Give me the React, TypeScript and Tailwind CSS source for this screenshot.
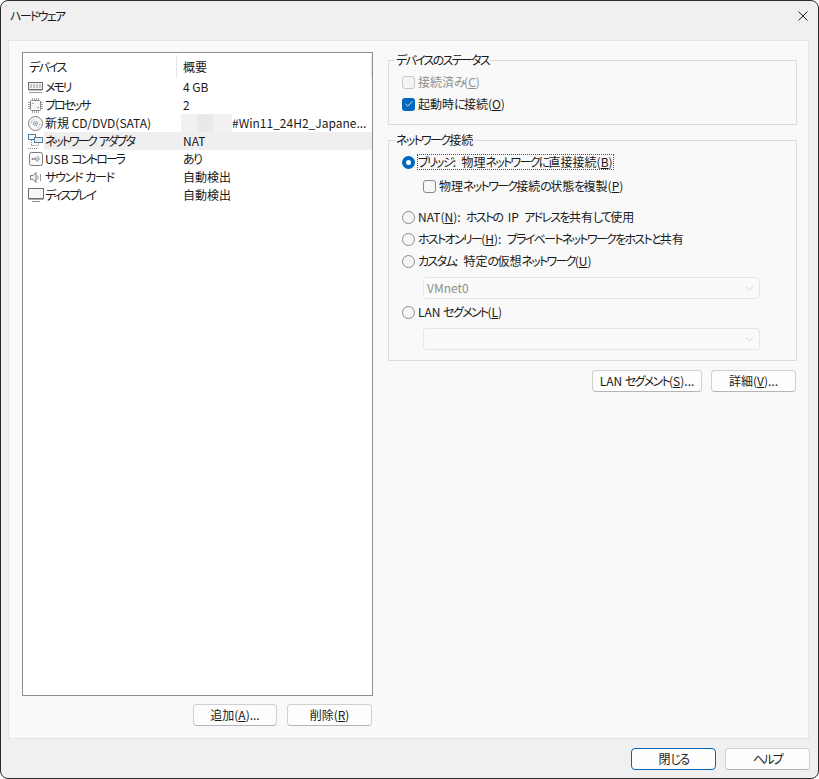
import type { ReactNode } from 'react';
import { ChevronDown, Check } from 'lucide-react';

const FONT = 'font-["Noto_Sans_CJK_JP","Noto_Sans",sans-serif] [font-feature-settings:"palt"]';

// kana in the reference font is much narrower than in Noto, so tighten those runs
function T({ children, tracking = 'tracking-[-1.7px]' }: { children: string; tracking?: string }) {
  const parts = children.split(/([\u3040-\u30ff]+)/);
  return (
    <>
      {parts.map((part, i) =>
        i % 2 === 1 ? (
          <span key={i} className={tracking}>
            {part}
          </span>
        ) : (
          part
        ),
      )}
    </>
  );
}

function MemoryIcon() {
  return (
    <svg viewBox="0 0 15 11" className="w-[15px] h-[11px]" fill="none" stroke="#6f6f6f" strokeWidth="1">
      <rect x="0.5" y="0.5" width="14" height="7" fill="#f2f2f2" />
      <path d="M2 3h11M2 5h11" stroke="#9a9a9a" strokeDasharray="2 1" />
      <path d="M1 8.5h13" stroke="#c0c0c0" />
      <path d="M1 10.5h13" stroke="#9a9a9a" />
    </svg>
  );
}

function CpuIcon() {
  return (
    <svg viewBox="0 0 15 15" className="size-[15px]" fill="none" stroke="#8a8a8a" strokeWidth="1">
      <rect x="2.5" y="2.5" width="10" height="10" rx="1" fill="#f7f7f7" />
      <path d="M4.5 5.5h1M10.5 9.5h-1" stroke="#555" />
      <path
        d="M4.5 0v2M6.5 0v2M8.5 0v2M10.5 0v2M4.5 13v2M6.5 13v2M8.5 13v2M10.5 13v2M0 4.5h2M0 6.5h2M0 8.5h2M0 10.5h2M13 4.5h2M13 6.5h2M13 8.5h2M13 10.5h2"
        stroke="#a5a5a5"
      />
    </svg>
  );
}

function DiscIcon() {
  return (
    <svg viewBox="0 0 15 15" className="size-[15px]" fill="none" stroke="#808080" strokeWidth="1">
      <circle cx="7.5" cy="7.5" r="7" fill="#f7f7f7" />
      <circle cx="7.5" cy="7.5" r="2" fill="#fff" stroke="#9a9a9a" />
      <circle cx="7.5" cy="7.5" r="0.8" fill="#6f6f6f" stroke="none" />
      <path d="M3 7.5a4.5 4.5 0 0 1 3-4.2M12 7.5a4.5 4.5 0 0 1-3 4.2" stroke="#c5c5c5" />
    </svg>
  );
}

function NetworkIcon() {
  return (
    <svg viewBox="0 0 15 15" className="size-[15px]" fill="none" strokeWidth="1">
      <rect x="0.5" y="0.5" width="7" height="5" fill="#f4f8fb" stroke="#4f7ea3" />
      <rect x="6.5" y="3.5" width="8" height="5" fill="#e8f0f6" stroke="#4f7ea3" />
      <path d="M3.5 6v5M0 14.5h9M3.5 11.5h7V9" stroke="#7d8a94" strokeDasharray="1 1" />
    </svg>
  );
}

function UsbIcon() {
  return (
    <svg viewBox="0 0 14 14" className="size-[14px]" fill="none" stroke="#7a7a7a" strokeWidth="1">
      <rect x="0.5" y="0.5" width="13" height="13" rx="2" fill="#fafafa" />
      <path d="M3 7h8M8 5h2M5 7l2-2M6 7l2 2h1.5" stroke="#8a8a8a" />
      <circle cx="3.5" cy="7" r="1" fill="#8a8a8a" stroke="none" />
    </svg>
  );
}

function SpeakerIcon() {
  return (
    <svg viewBox="0 0 12 11" className="w-3 h-[11px]" fill="none" stroke="#7a7a7a" strokeWidth="1">
      <path d="M0.5 3.5h2.5l3-3v10l-3-3H0.5z" fill="#f2f2f2" />
      <path d="M8 3.5v4M10.5 2v7" stroke="#9a9a9a" />
    </svg>
  );
}

function MonitorIcon() {
  return (
    <svg viewBox="0 0 16 14" className="w-4 h-3.5" fill="none" stroke="#6f6f6f" strokeWidth="1">
      <rect x="0.5" y="0.5" width="15" height="10" fill="#f6f6f6" />
      <path d="M0.5 11.5h15" stroke="#a8a8a8" />
      <path d="M4 13.5h8" stroke="#8a8a8a" />
    </svg>
  );
}

type Device = { icon: ReactNode; name: string; summary: ReactNode; selected?: boolean; tracking?: string };

const DEVICES: Device[] = [
  { icon: <MemoryIcon />, name: 'メモリ', summary: '4 GB' },
  { icon: <CpuIcon />, name: 'プロセッサ', summary: '2' },
  {
    icon: <DiscIcon />,
    name: '新規 CD/DVD(SATA)',
    summary: (
      <span className="flex items-center h-[18px] -ml-[2px]">
        <span className="w-4 h-[18px] bg-[#f1f1f1]" />
        <span className="w-4 h-[18px] bg-[#e9e9e9]" />
        <span className="w-[19px] h-[18px] bg-[#f1f1f1]" />
        <span>#Win11_24H2_Japane...</span>
      </span>
    ),
  },
  { icon: <NetworkIcon />, name: 'ネットワーク アダプタ', summary: 'NAT', selected: true },
  { icon: <UsbIcon />, name: 'USB コントローラ', summary: <T>あり</T> },
  { icon: <SpeakerIcon />, name: 'サウンド カード', summary: '自動検出', tracking: 'tracking-[-1.2px]' },
  { icon: <MonitorIcon />, name: 'ディスプレイ', summary: '自動検出' },
];

function DeviceRow({ device }: { device: Device }) {
  return (
    <div className="flex h-[18px] items-center">
      <div className="w-[21px] shrink-0 flex items-center justify-center pl-[4px]">{device.icon}</div>
      <div className={`flex flex-1 h-[18px] items-center ${device.selected ? 'bg-[#efefef]' : ''}`}>
        <div className="w-[139px] pl-px shrink-0 whitespace-nowrap">
          <T tracking={device.tracking ?? 'tracking-[-2.1px]'}>{device.name}</T>
        </div>
        <div className="whitespace-nowrap">{device.summary}</div>
      </div>
    </div>
  );
}

function Button({ children, w = 'w-[85px]', primary }: { children: ReactNode; w?: string; primary?: boolean }) {
  return (
    <button
      type="button"
      className={`${w} h-[22px] rounded-[4px] bg-[#fdfdfd] border text-center whitespace-nowrap ${
        primary ? 'border-[#0067c0]' : 'border-[#d0d0d0] border-b-[#b5b5b5]'
      }`}
    >
      {children}
    </button>
  );
}

function Checkbox({ checked, disabled }: { checked?: boolean; disabled?: boolean }) {
  if (checked) {
    return (
      <span className="size-[13px] rounded-[3px] bg-[#0067c0] grid place-items-center shrink-0">
        <Check className="size-[10px] text-white" strokeWidth={2} />
      </span>
    );
  }
  return (
    <span
      className={`size-[13px] rounded-[3px] border shrink-0 ${
        disabled ? 'border-[#c6c6c6] bg-[#f5f5f5]' : 'border-[#8a8a8a] bg-[#f6f6f6]'
      }`}
    />
  );
}

function Radio({ checked }: { checked?: boolean }) {
  if (checked) {
    return (
      <span className="size-[13px] rounded-full bg-[#0067c0] grid place-items-center shrink-0">
        <span className="size-[5px] rounded-full bg-white" />
      </span>
    );
  }
  return <span className="size-[13px] rounded-full border border-[#8a8a8a] bg-[#f6f6f6] shrink-0" />;
}

function OptionRow({ control, children, className = '' }: { control: ReactNode; children: ReactNode; className?: string }) {
  return (
    <div className={`flex h-[22px] items-center gap-[3px] whitespace-nowrap ${className}`}>
      {control}
      {children}
    </div>
  );
}

function Group({ title, children, className = '' }: { title: string; children: ReactNode; className?: string }) {
  return (
    <fieldset className={`border border-[#dcdcdc] min-w-0 pl-[13px] ${className}`}>
      <legend className="-ml-[7px] px-[1px] h-4 leading-4">
        <T>{title}</T>
      </legend>
      {children}
    </fieldset>
  );
}

function Select({ value }: { value?: string }) {
  return (
    <div className="ml-[21px] mt-[5px] w-[337px] h-[22px] rounded-[3px] border border-[#e6e6e6] bg-[#fafafa] flex items-center justify-between pl-[3px] pr-[3px] text-[#8f8f8f]">
      <span>{value}</span>
      <ChevronDown className="size-[13px] text-[#b0b0b0]" strokeWidth={1} />
    </div>
  );
}

export default function App() {
  return (
    <div className={`w-[819px] h-[779px] flex flex-col bg-[#f0f0f0] border border-[#2b2b2b] rounded-lg overflow-hidden text-xs text-[#1a1a1a] ${FONT}`}>
      <div className="h-[30px] shrink-0 flex items-center justify-between pl-[9px] pr-[10px]">
        <span>
          <T>ハードウェア</T>
        </span>
        <svg viewBox="0 0 10 10" className="size-[10px]" fill="none" stroke="#222" strokeWidth="1">
          <path d="M0.5 0.5l9 9M9.5 0.5l-9 9" />
        </svg>
      </div>

      <div className="mt-[9px] ml-[7px] mr-[9px] flex-1 min-h-0 flex gap-[15px] bg-[#f9f9f9] border border-[#e5e5e5] pt-[11px] pl-[13px] pr-[11px] pb-[12px]">
        <div className="w-[351px] shrink-0 flex flex-col">
          <div className="flex-1 min-h-0 bg-white border border-[#8a8f96]">
            <div className="h-[25px] flex items-center pt-[2px]">
              <div className="w-[154px] h-[23px] border-r border-[#e5e5e5] pl-[6px] leading-[23px]">
                <T>デバイス</T>
              </div>
              <div className="flex-1 h-[23px] border-r border-[#e5e5e5] pl-[6px] leading-[23px]">概要</div>
            </div>
            {DEVICES.map((device) => (
              <DeviceRow key={device.name} device={device} />
            ))}
          </div>
          <div className="mt-[8px] flex justify-end gap-[10px] pr-px">
            <Button w="w-[84px]">
              追加(<u>A</u>)...
            </Button>
            <Button>
              削除(<u>R</u>)
            </Button>
          </div>
        </div>

        <div className="flex-1 min-w-0 flex flex-col">
          <Group title="デバイスのステータス" className="pt-[3px] pb-[9px]">
            <OptionRow control={<Checkbox disabled />} className="text-[#8f8f8f]">
              <span>
                <T>接続済み(</T>
                <u>C</u>)
              </span>
            </OptionRow>
            <OptionRow control={<Checkbox checked />}>
              <span>
                <T>起動時に接続(</T>
                <u>O</u>)
              </span>
            </OptionRow>
          </Group>

          <Group title="ネットワーク接続" className="mt-[7px] pt-[3px] pb-[10px]">
            <OptionRow control={<Radio checked />}>
              <span className="border border-dotted border-[#555] leading-[14px] -ml-px">
                <T>{'ブリッジ:\u00a0\u00a0物理ネットワークに直接接続('}</T>
                <u>B</u>)
              </span>
            </OptionRow>
            <OptionRow control={<Checkbox />} className="ml-[21px] mt-[2px]">
              <span>
                <T>物理ネットワーク接続の状態を複製(</T>
                <u>P</u>)
              </span>
            </OptionRow>
            <OptionRow control={<Radio />} className="mt-[9px]">
              <span>
                NAT(<u>N</u>)<T>{':\u00a0\u00a0ホストの\u00a0\u00a0IP\u00a0\u00a0アドレスを共有して使用'}</T>
              </span>
            </OptionRow>
            <OptionRow control={<Radio />}>
              <span>
                <T>ホストオンリー(</T>
                <u>H</u>)<T>{':\u00a0\u00a0プライベートネットワークをホストと共有'}</T>
              </span>
            </OptionRow>
            <OptionRow control={<Radio />}>
              <span>
                <T>{'カスタム:\u00a0\u00a0特定の仮想ネットワーク('}</T>
                <u>U</u>)
              </span>
            </OptionRow>
            <Select value="VMnet0" />
            <OptionRow control={<Radio />} className="mt-[2px]">
              <span>
                <T>LAN セグメント(</T>
                <u>L</u>)
              </span>
            </OptionRow>
            <Select />
          </Group>

          <div className="mt-[9px] flex justify-end gap-[9px] pr-px">
            <Button w="w-[110px]">
              <T>LAN セグメント(</T>
              <u>S</u>)...
            </Button>
            <Button>
              詳細(<u>V</u>)...
            </Button>
          </div>
        </div>
      </div>

      <div className="h-[39px] shrink-0 flex justify-end gap-[9px] pt-[9px] pr-[8px]">
        <Button primary>
          <T>閉じる</T>
        </Button>
        <Button>
          <T>ヘルプ</T>
        </Button>
      </div>
    </div>
  );
}
